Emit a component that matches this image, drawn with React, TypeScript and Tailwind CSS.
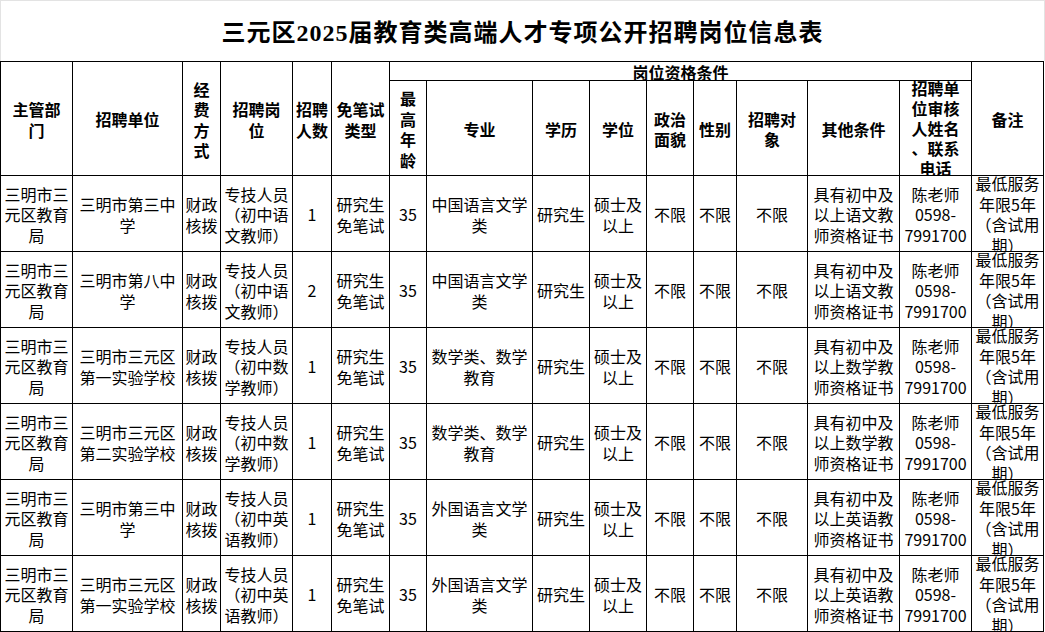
import React from "react";

const font = { fontFamily: '"Noto Sans CJK SC", "Noto Sans", sans-serif' };

type Row = {
  unit: string[];
  post: string[];
  count: string;
  major: string[];
  subj: string;
};

const rows: Row[] = [
  { unit: ["三明市第三中", "学"], post: ["专技人员", "（初中语", "文教师）"], count: "1", major: ["中国语言文学", "类"], subj: "语文" },
  { unit: ["三明市第八中", "学"], post: ["专技人员", "（初中语", "文教师）"], count: "2", major: ["中国语言文学", "类"], subj: "语文" },
  { unit: ["三明市三元区", "第一实验学校"], post: ["专技人员", "（初中数", "学教师）"], count: "1", major: ["数学类、数学", "教育"], subj: "数学" },
  { unit: ["三明市三元区", "第二实验学校"], post: ["专技人员", "（初中数", "学教师）"], count: "1", major: ["数学类、数学", "教育"], subj: "数学" },
  { unit: ["三明市第三中", "学"], post: ["专技人员", "（初中英", "语教师）"], count: "1", major: ["外国语言文学", "类"], subj: "英语" },
  { unit: ["三明市三元区", "第一实验学校"], post: ["专技人员", "（初中英", "语教师）"], count: "1", major: ["外国语言文学", "类"], subj: "英语" },
];

function Cell({
  lines,
  className = "",
  top = false,
}: {
  lines: string[];
  className?: string;
  top?: boolean;
}) {
  return (
    <div
      className={`flex justify-center overflow-hidden bg-white text-center ${
        top ? "items-start" : "items-center pt-[2px]"
      } ${className}`}
    >
      <div className={`whitespace-nowrap ${top ? "-mt-[3px]" : ""}`}>
        {lines.map((l, i) => (
          <div key={i}>{l}</div>
        ))}
      </div>
    </div>
  );
}

export default function App() {
  return (
    <div
      className="h-[632px] w-[1045px] overflow-hidden bg-white text-[16px] leading-[20.5px] text-black"
      style={font}
    >
      {/* title */}
      <div className="flex h-[61px] w-[1045px] items-center justify-center border-x border-t border-[#e3e3e3] pt-[3px]">
        <h1
          className="text-[24px] font-bold leading-none tracking-[1px]"
          style={{ fontFamily: '"Liberation Serif", "Noto Sans CJK SC", serif' }}
        >
          三元区2025届教育类高端人才专项公开招聘岗位信息表
        </h1>
      </div>

      {/* table as grid, gaps draw the rules */}
      <div className="grid w-[1044px] grid-cols-[71px_109px_37px_71px_38px_57px_36px_105px_56px_56px_46px_42px_70px_91px_71px_71px] grid-rows-[18px_94px_repeat(6,75px)] gap-px bg-black p-px">
        <Cell className="row-span-2 font-bold" lines={["主管部", "门"]} />
        <Cell className="row-span-2 font-bold" lines={["招聘单位"]} />
        <Cell className="row-span-2 font-bold" lines={["经", "费", "方", "式"]} />
        <Cell className="row-span-2 font-bold" lines={["招聘岗", "位"]} />
        <Cell className="row-span-2 font-bold" lines={["招聘", "人数"]} />
        <Cell className="row-span-2 font-bold" lines={["免笔试", "类型"]} />
        <Cell className="col-span-9 font-bold leading-[18px]" lines={["岗位资格条件"]} />
        <Cell className="row-span-2 font-bold" lines={["备注"]} />

        <Cell className="font-bold" lines={["最", "高", "年", "龄"]} />
        <Cell className="font-bold" lines={["专业"]} />
        <Cell className="font-bold" lines={["学历"]} />
        <Cell className="font-bold" lines={["学位"]} />
        <Cell className="font-bold" lines={["政治", "面貌"]} />
        <Cell className="font-bold" lines={["性别"]} />
        <Cell className="font-bold" lines={["招聘对", "象"]} />
        <Cell className="font-bold" lines={["其他条件"]} />
        <Cell
          top
          className="font-bold leading-[20px]"
          lines={["招聘单", "位审核", "人姓名", "、联系", "电话"]}
        />

        {rows.map((r, i) => (
          <React.Fragment key={i}>
            <Cell lines={["三明市三", "元区教育", "局"]} />
            <Cell lines={r.unit} />
            <Cell lines={["财政", "核拨"]} />
            <Cell lines={r.post} />
            <Cell lines={[r.count]} />
            <Cell lines={["研究生", "免笔试"]} />
            <Cell lines={["35"]} />
            <Cell lines={r.major} />
            <Cell lines={["研究生"]} />
            <Cell lines={["硕士及", "以上"]} />
            <Cell lines={["不限"]} />
            <Cell lines={["不限"]} />
            <Cell lines={["不限"]} />
            <Cell lines={["具有初中及", `以上${r.subj}教`, "师资格证书"]} />
            <Cell lines={["陈老师", "0598-", "7991700"]} />
            <Cell top lines={["最低服务", "年限5年", "（含试用", "期）"]} />
          </React.Fragment>
        ))}
      </div>
    </div>
  );
}
